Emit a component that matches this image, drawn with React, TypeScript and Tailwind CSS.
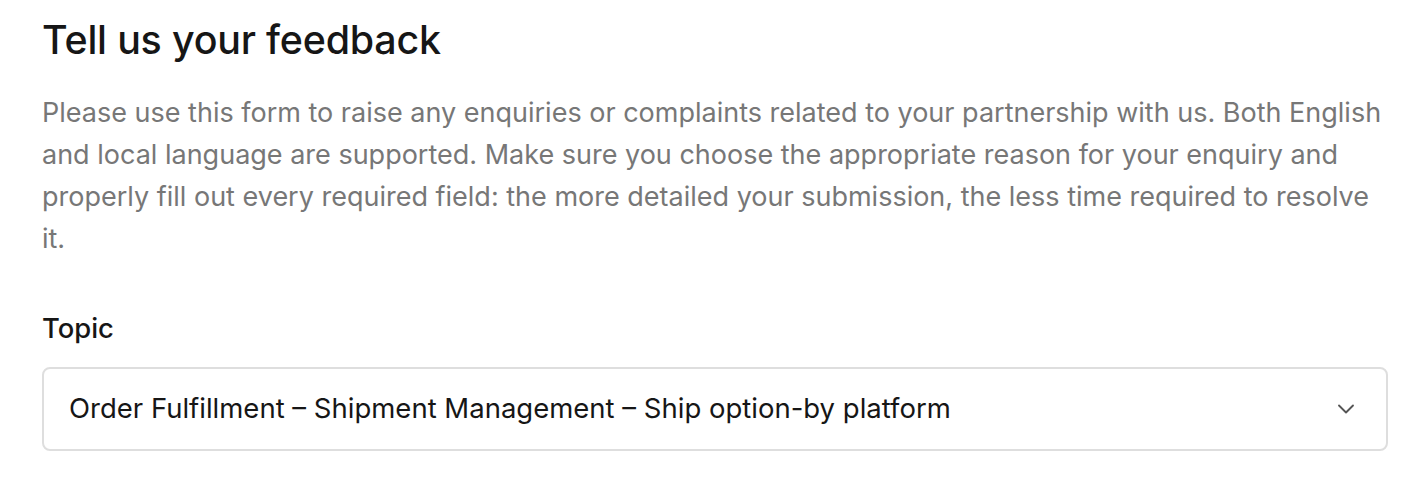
import { ChevronDown } from "lucide-react";

export default function App(){

return(

<div className="min-h-screen bg-white px-[42px] pt-[14px] font-['Inter',sans-serif]">

<h1 className="text-[39.4px] leading-[52px] font-medium text-[#161616] tracking-[-0.2px]">
Tell us your feedback
</h1>

<p className="mt-[26px] text-[27px] leading-[42px] text-[#777777] w-[1350px]">
Please use this form to raise any enquiries or complaints related to your partnership with us. Both English and local language are supported. Make sure you choose the appropriate reason for your enquiry and properly fill out every required field: the more detailed your submission, the less time required to resolve it.
</p>

<div className="mt-[52px]">

<label className="block text-[27.4px] leading-[32px] font-medium text-[#161616]">
Topic
</label>

<div className="mt-[23px] h-[84px] w-[1346px] flex items-center justify-between border-2 border-[#dedede] rounded-[8px] pl-[25px] pr-[26px]">
<span className="text-[27.5px] text-[#161616]">
Order Fulfillment – Shipment Management – Ship option-by platform
</span>
<ChevronDown size={28} strokeWidth={1.6} className="text-[#555]"/>
</div>

</div>

</div>

);

}
